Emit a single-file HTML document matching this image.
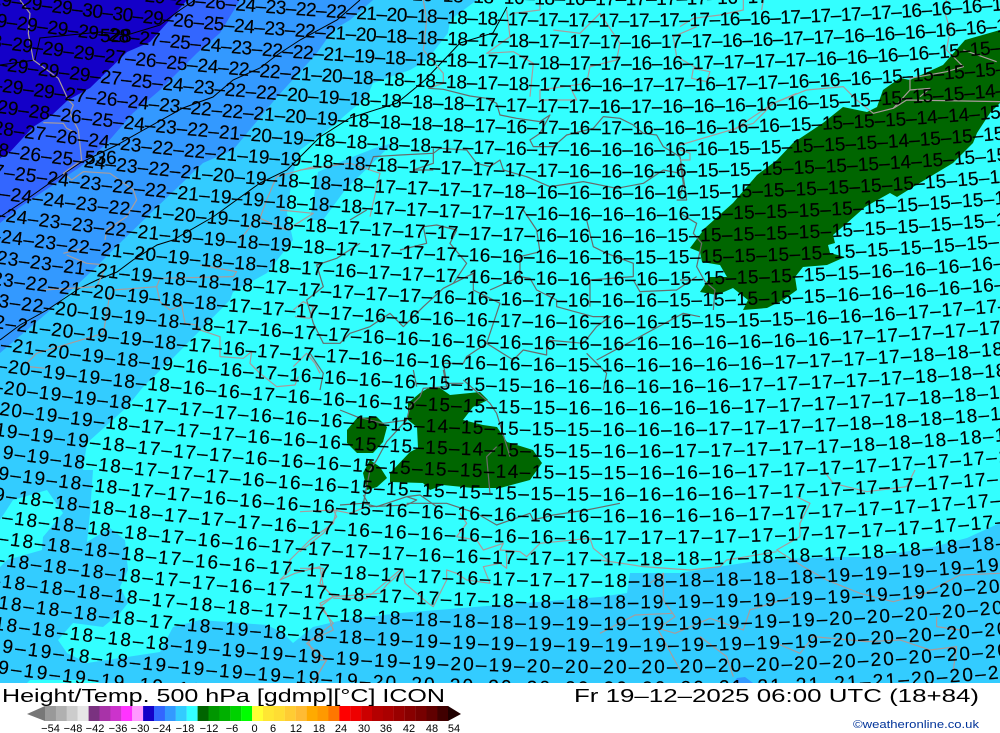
<!DOCTYPE html>
<html><head><meta charset="utf-8"><title>Height/Temp. 500 hPa ICON</title>
<style>
html,body{margin:0;padding:0;background:#fff;width:1000px;height:733px;overflow:hidden}
svg{display:block;position:absolute;left:0;top:0}
.r text{font:19px "Liberation Sans",sans-serif;fill:#000;stroke:#000;stroke-width:.15;font-kerning:none;text-rendering:geometricPrecision}
.f text{font-family:"Liberation Sans",sans-serif;fill:#000}
.l polyline{fill:none;stroke:#a89c9c;stroke-width:3.6;stroke-linejoin:round}
.d polyline{stroke:#6a6a6a}
</style></head><body>
<svg width="1000" height="733" viewBox="0 0 1000 733" xmlns="http://www.w3.org/2000/svg">
<defs><path id="p" d="M-40,-48.4 A4500 4500 0 0 0 1040,-19.6"/><clipPath id="c"><rect width="1000" height="683"/></clipPath></defs>
<g clip-path="url(#c)">
<rect width="1000" height="683" fill="#33ccff"/>
<polygon fill="#33ffff" points="477,0 1000,0 1000,523 967,538 933,547 873,557 833,557 763,560 717,567 680,573 630,573 627,593 600,597 400,613 343,620 313,627 293,643 283,633 267,625 200,620 173,627 160,652 127,657 87,663 67,653 58,640 73,623 103,627 120,613 128,603 120,587 128,570 125,540 110,528 87,542 90,513 93,470 83,470 87,443 127,407 143,387 173,358 230,300 233,292 267,273 293,240 287,213 293,173 300,150 337,123 343,117 367,97 373,83 410,70 427,60 448,33 450,20"/>
<polygon fill="#33ccff" points="393,143 375,148 345,160 318,172 310,220 323,220 345,190"/>
<polygon fill="#33ffff" points="47,490 63,513 43,537 42,550 7,560 0,567 0,520 13,500"/>
<polygon fill="#33ffff" points="27,683 100,683 90,680 30,680"/>
<polygon fill="#3399ff" points="373,0 350,20 333,30 317,53 308,63 277,97 233,150 203,163 157,207 123,240 93,270 47,313 0,353 0,0"/>
<polygon fill="#3366ff" points="240,0 220,33 197,53 160,90 133,113 107,143 80,167 50,187 20,207 0,223 0,0"/>
<polygon fill="#1400c8" points="187,0 167,23 150,42 127,52 90,88 68,100 52,115 33,127 10,152 0,158 0,0"/>
<polygon fill="#3399ff" points="733,683 737,678 745,677 753,683"/>
<g fill="#006600">
<polygon points="430,387 440,388 450,395 480,392 488,400 473,407 463,420 483,425 497,427 507,442 533,450 542,463 530,480 500,488 473,488 443,485 430,490 423,483 390,482 390,473 410,452 418,448 417,427 408,420 408,403 420,393"/>
<polygon points="357,418 377,417 387,427 383,442 373,453 357,453 347,443 347,430"/>
<polygon points="370,460 380,467 387,478 377,487 367,490 363,473"/>
<polygon points="690,248 705,228 733,203 757,175 777,160 793,143 823,123 843,107 867,112 877,107 883,90 900,78 910,80 943,65 965,40 1000,30 1000,103 990,113 977,133 973,143 953,163 913,187 897,197 890,193 865,207 847,223 833,235 835,243 828,245 830,253 845,257 827,265 803,267 795,277 797,290 783,300 767,308 743,310 748,300 733,288 717,295 700,292 710,277 727,277 720,265 702,262 700,252"/>
</g>
<g fill="none" stroke="#000" stroke-width="1">
<polyline points="0,65 35,60 40,38 100,32 127,35 160,25 180,10 195,0"/>
<polyline points="0,217 30,197 47,185 80,163 117,145 147,128 183,108 213,97 233,80 260,68 277,55 300,40 337,20 360,0"/>
<polyline points="0,340 20,325 47,310 80,288 97,280 117,272 133,260 157,245 173,240 213,217 260,183 287,170 300,157 320,137 350,118 397,103 425,80 460,43 493,33 507,7"/>
</g>
<g class="l" transform="scale(.3333)">
<polyline points="60,0 90,40 85,100 100,180 175,235 205,300 220,315 210,340 235,390 245,480 190,520 215,540 250,515 330,520 400,570 410,600 380,650 320,690 315,720"/>
<polyline points="130,368 190,370 200,385 230,400"/>
<polyline points="940,500 830,530 800,600 780,655 860,690 940,640 840,630"/><polyline points="770,655 720,720"/>
</g>
<g class="l" transform="translate(0,230) scale(.3333)">
<polyline points="190,70 250,55"/><polyline points="200,75 260,100 320,105 290,170 130,180"/>
<polyline points="340,180 470,170 480,215 510,240 545,225 555,280 590,285 600,300 660,320 660,380 730,385 755,365 750,400 780,430 830,470 885,465 895,440"/>
<polyline points="80,400 110,370 310,310 330,190"/><polyline points="85,410 135,415"/>
<polyline points="600,105 710,125 700,140 480,145 470,170"/>
<polyline points="880,240 910,215 940,230 930,265 885,260"/>
<polyline points="880,410 920,370 945,400 960,430"/>
</g>
<g class="l" transform="translate(0,470) scale(.3333)">
<polyline points="1010,115 1000,160 930,210 870,270 870,300 840,330 885,310 960,290 970,350 1000,380 960,400 985,440 1000,480 925,515 950,570 980,570 945,630"/>
<polyline points="1000,385 1100,385 1200,300"/>
</g>
<g class="l" transform="translate(600,470) scale(.3333)">
<polyline points="590,80 630,100 600,160 600,200 530,240 610,290 680,330 780,370 880,395 975,370 1080,315 1200,310"/>
<polyline points="0,270 130,290 270,300 360,290 380,270 530,245"/>
<polyline points="150,340 190,310 190,390 225,440 175,475 225,490 330,445 430,480 450,420 580,380"/>
<polyline points="0,490 105,435 220,430"/><polyline points="175,480 240,600"/>
<polyline points="300,500 380,560 400,620"/>
<polyline points="530,520 600,550 640,500 800,515 900,510 990,540 1070,530 1060,600"/>
<polyline points="670,0 700,40 800,65 920,50 945,0"/>
<polyline points="1010,440 1010,470 1080,480"/>
</g>
<g class="l" transform="translate(300,0) scale(.3333)">
<polyline points="620,30 630,110 560,160 640,155 700,190 690,290"/>
<polyline points="720,0 720,30 640,40"/><polyline points="760,90 840,100 900,40 960,130 950,180 870,200 860,250 720,270 720,300 830,300 810,260"/>
<polyline points="1190,80 1120,110 1130,170 1200,210"/>
<polyline points="370,0 380,60 370,150 430,220 430,250 385,265"/>
<polyline points="0,510 150,490 240,520 210,650"/>
</g>
<g class="l d" transform="translate(300,0) scale(.3333)">
<polyline points="385,265 430,268 510,288 560,295 590,310 600,345 650,355 720,365 750,345 720,400 690,420 700,440 760,440 800,405 880,385 910,350 960,355 1000,375 1030,400 1070,405 1090,440 1140,470 1150,530 1160,600 1130,600"/>
<polyline points="205,510 220,470 300,465 400,460 420,445 500,450 530,490 570,500 600,480 610,510 680,530 750,560 850,545 950,565 1030,550 1090,510 1140,520"/>
<polyline points="400,445 400,490 340,510 400,510"/>
</g>
<g class="l d" transform="translate(280,210) scale(.3333)">
<polyline points="210,30 260,0"/>
<polyline points="240,100 170,145 110,165 130,230 80,270 100,340 120,380 130,400 180,400 210,370 270,350 330,310 370,350 430,290 490,235 580,190 580,240 660,280 640,340 620,400 560,440 550,460 490,460 500,520 550,520"/>
<polyline points="360,120 440,100 430,50 470,45 530,60 510,100 560,160 520,220"/>
<polyline points="720,200 750,205 770,240 830,270 830,290 940,320 990,320 950,350 910,400 800,390 800,435 730,420 700,450 620,400"/>
<polyline points="720,140 780,125 770,60 730,0"/><polyline points="720,140 720,200 630,240"/>
<polyline points="930,210 1060,200 1060,160 980,130 940,110 920,30"/><polyline points="930,210 930,290"/>
<polyline points="1060,210 1080,245 1190,240 1250,200"/>
<polyline points="950,450 1080,380 1210,310 1260,320"/><polyline points="920,430 980,490 970,540"/>
<polyline points="90,430 130,490 120,540"/>
</g>
<g class="l" transform="translate(680,0) scale(.3333)">
<polyline points="0,80 40,55 120,45 190,30 190,0"/><polyline points="250,0 245,30"/>
<polyline points="40,205 35,235 80,245 90,215 40,205"/>
<polyline points="160,390 280,310 380,270 490,260 530,300 580,340 640,325 690,270 690,235"/>
<polyline points="640,325 680,300 960,305"/>
<polyline points="690,235 800,215 850,200 800,150 810,90 790,20 800,0"/>
<polyline points="850,150 950,185"/><polyline points="690,270 750,265 720,290"/>
</g>
<g class="l" transform="translate(680,60) scale(.3333)">
<polyline points="0,270 30,280 30,300 0,300"/><polyline points="0,255 220,190 280,130 350,100"/>
</g>
<g class="l d" transform="translate(680,60) scale(.3333)">
<polyline points="0,310 10,370 0,410"/><polyline points="0,460 50,490 40,520 65,550 50,620 75,665 105,690 100,750"/><polyline points="60,660 0,660"/>
</g>
<g class="l d" transform="translate(340,370) scale(.3333)">
<polyline points="220,0 230,50"/><polyline points="310,0 320,50 250,55 240,80 210,110 200,150 140,215 110,270 90,300 70,400"/>
<polyline points="0,120 50,140 130,160 200,150"/><polyline points="370,30 450,100 470,130 510,260"/>
<polyline points="470,230 440,260 450,370"/><polyline points="0,405 70,400 110,410 200,380 240,375 290,410"/>
</g>
<g class="l d" transform="translate(300,490) scale(.3333)">
<polyline points="190,15 210,50 320,45 350,30 320,20"/>
<polyline points="320,40 440,40 530,70 590,105 690,70 700,90 760,75 860,60 960,40"/>
</g>
<g class="l" transform="translate(300,490) scale(.3333)">
<polyline points="0,65 100,60 150,70 200,50"/><polyline points="100,60 110,80 70,130 0,185"/>
<polyline points="480,70 500,100 470,140 530,150 550,180 610,160 600,180 660,185 680,200 720,160 870,145 880,175 930,215"/>
<polyline points="0,235 70,235 60,280 100,320 60,350 100,400 20,460 80,510 40,575"/>
<polyline points="100,320 240,310 260,285 310,240 315,280 385,340 400,350 440,270 440,240 470,250 500,270 570,280 550,230 600,220 620,235 620,190"/>
</g>
<g class="r">
<text transform="translate(0,5)" letter-spacing="-.4"><textPath href="#p" startOffset="424">21–20–18–18–16–18–16–17–17–17–17–16–17–</textPath></text>
<text transform="translate(0,26.5)" letter-spacing="-.46"><textPath href="#p" startOffset="186">29–26–26–24–23–22–22–21–20–18–18–18–17–17–17–17–17–17–17–16–16–17–17–17–17–16–16–16–16–</textPath></text>
<text transform="translate(0,48)" letter-spacing="-.39"><textPath href="#p" startOffset="31">29–29–29–30–30–29–26–25–24–23–22–21–20–18–18–18–17–18–17–17–17–16–17–17–16–16–17–17–16–16–16–16–16–16–</textPath></text>
<text transform="translate(0,69.6)" letter-spacing="-.29"><textPath href="#p" startOffset="26">29–29–29–29–28–27–25–24–23–22–22–21–19–18–18–18–17–17–18–17–17–16–16–17–17–17–17–16–16–16–16–15–15–</textPath></text>
<text transform="translate(0,91.1)" letter-spacing="-.19"><textPath href="#p" startOffset="20.6">28–29–29–29–27–26–25–24–22–22–21–20–18–18–18–18–17–18–17–16–16–17–17–16–17–17–16–16–16–15–15–15–15–</textPath></text>
<text transform="translate(0,112.7)" letter-spacing="-.13"><textPath href="#p" startOffset="15.8">29–29–29–29–27–25–24–23–22–22–20–19–18–18–18–18–17–17–17–17–16–17–16–16–16–16–16–15–15–15–15–15–14–</textPath></text>
<text transform="translate(0,134.2)" letter-spacing="-.03"><textPath href="#p" startOffset="10.4">29–29–29–27–26–24–23–22–22–21–20–19–18–18–18–18–17–16–17–16–17–16–16–16–16–16–15–15–15–15–14–14–15–</textPath></text>
<text transform="translate(0,155.8)" letter-spacing=".07"><textPath href="#p" startOffset="5">29–29–28–26–25–24–23–22–21–20–19–18–18–18–18–17–17–16–17–16–16–16–16–16–15–15–15–15–15–14–15–15–15–</textPath></text>
<text transform="translate(0,177.3)" letter-spacing=".14"><textPath href="#p" startOffset=".2">29–28–27–26–24–23–22–22–21–19–19–18–18–18–17–17–17–17–17–16–16–16–16–15–15–15–15–15–15–14–15–15–15–</textPath></text>
<text transform="translate(0,198.9)" letter-spacing=".24"><textPath href="#p" startOffset="27.2">28–26–25–24–23–22–21–20–19–18–18–18–17–17–17–17–18–16–16–16–16–16–15–15–15–15–15–15–15–15–15–15–</textPath></text>
<text transform="translate(0,220.4)" letter-spacing=".34"><textPath href="#p" startOffset="22.1">27–25–24–23–22–22–21–19–19–18–18–18–17–17–17–17–17–16–16–16–16–16–15–15–15–15–15–15–15–15–15–15–</textPath></text>
<text transform="translate(0,242)" letter-spacing=".41"><textPath href="#p" startOffset="17.5">25–24–24–23–22–21–20–19–18–18–18–17–17–17–17–17–17–16–16–16–16–15–15–15–15–15–15–15–15–15–15–15–</textPath></text>
<text transform="translate(0,263.5)" letter-spacing=".51"><textPath href="#p" startOffset="12.4">25–24–23–23–22–21–19–19–18–19–18–17–17–17–17–16–16–16–16–16–15–15–15–15–15–15–15–15–15–15–15–</textPath></text>
<text transform="translate(0,285.1)" letter-spacing=".61"><textPath href="#p" startOffset="7.4">25–24–23–22–21–20–19–18–18–18–17–16–17–17–17–16–16–16–16–16–16–15–15–15–15–15–15–16–16–16–16–</textPath></text>
<text transform="translate(0,306.6)" letter-spacing=".67"><textPath href="#p" startOffset="2.6">24–23–23–21–21–19–18–18–18–17–17–17–17–17–16–16–16–17–16–16–16–15–15–15–15–15–16–16–16–16–16–</textPath></text>
<text transform="translate(0,328.2)" letter-spacing=".77"><textPath href="#p" startOffset="31.6">23–22–21–20–19–18–18–17–17–17–17–16–16–16–16–17–16–16–16–16–15–15–15–15–16–16–16–17–17–17–</textPath></text>
<text transform="translate(0,349.7)" letter-spacing=".87"><textPath href="#p" startOffset="26.8">23–22–20–19–19–18–18–17–16–17–17–16–16–16–16–16–16–16–16–16–16–16–16–16–16–17–17–17–17–17–</textPath></text>
<text transform="translate(0,371.3)" letter-spacing=".94"><textPath href="#p" startOffset="22.4">22–21–20–19–19–18–17–16–17–17–17–16–16–16–16–16–16–15–16–16–16–16–16–17–17–17–17–18–18–18–</textPath></text>
<text transform="translate(0,392.8)" letter-spacing="1.04"><textPath href="#p" startOffset="17.6">22–21–20–19–18–19–16–16–17–16–16–16–16–15–15–15–16–16–16–16–16–16–17–17–17–17–17–18–18–18–</textPath></text>
<text transform="translate(0,414.4)" letter-spacing="1.14"><textPath href="#p" startOffset="12.8">21–20–19–19–18–18–16–16–17–16–16–16–15–15–15–15–15–16–16–16–16–16–17–17–17–17–17–18–18–18–</textPath></text>
<text transform="translate(0,435.9)" letter-spacing="1.21"><textPath href="#p" startOffset="8.4">21–20–19–19–18–17–17–17–16–16–16–15–15–14–15–15–15–15–16–16–16–17–17–17–17–18–18–18–18–18–</textPath></text>
<text transform="translate(0,457.5)" letter-spacing="1.31"><textPath href="#p" startOffset="3.6">21–20–19–19–18–17–17–17–16–16–16–15–15–15–14–15–15–15–16–16–17–17–17–17–17–18–18–18–18–17–</textPath></text>
<text transform="translate(0,479)" letter-spacing="1.41"><textPath href="#p" startOffset="34.7">19–19–19–18–17–17–17–16–16–16–15–15–15–15–14–15–15–15–16–16–16–17–17–17–17–17–17–17–17–</textPath></text>
<text transform="translate(0,500.6)" letter-spacing="1.47"><textPath href="#p" startOffset="30.5">19–19–18–18–17–17–17–16–16–16–15–15–15–15–15–15–15–16–16–16–16–17–17–17–17–17–17–17–17–</textPath></text>
<text transform="translate(0,522.1)" letter-spacing="1.57"><textPath href="#p" startOffset="26">19–19–18–18–17–17–16–16–16–16–15–16–16–16–16–16–16–16–16–16–16–17–17–17–17–17–17–17–17–</textPath></text>
<text transform="translate(0,543.7)" letter-spacing="1.67"><textPath href="#p" startOffset="21.5">19–18–18–18–18–17–17–17–16–17–16–16–16–16–16–16–16–17–17–17–17–17–17–17–17–17–17–17–</textPath></text>
<text transform="translate(0,565.2)" letter-spacing="1.74"><textPath href="#p" startOffset="17.3">19–18–18–18–18–17–16–16–17–17–17–17–16–16–17–17–17–17–18–18–17–18–18–17–18–18–18–18–</textPath></text>
<text transform="translate(0,586.8)" letter-spacing="1.84"><textPath href="#p" startOffset="12.8">19–18–18–18–18–17–16–16–17–17–18–17–17–16–17–17–17–18–18–18–18–18–18–19–19–19–19–19–</textPath></text>
<text transform="translate(0,608.3)" letter-spacing="1.91"><textPath href="#p" startOffset="8.6">19–18–18–18–18–17–17–16–17–17–18–17–17–17–18–18–18–18–19–19–19–19–19–19–19–19–20–20–</textPath></text>
<text transform="translate(0,629.9)" letter-spacing="2.01"><textPath href="#p" startOffset="4.1">19–18–18–18–18–17–18–18–17–17–18–18–18–18–18–19–19–19–19–19–19–19–19–20–20–20–20–20–</textPath></text>
<text transform="translate(0,651.4)" letter-spacing="2.11"><textPath href="#p" startOffset="0">19–18–18–18–18–17–18–19–18–18–18–19–19–19–19–19–19–19–19–19–19–19–19–20–20–20–20–20–</textPath></text>
<text transform="translate(0,673)" letter-spacing="2.17"><textPath href="#p" startOffset="33.6">18–18–18–18–18–19–19–19–19–19–19–19–20–19–20–20–20–20–20–20–20–20–20–20–20–20–20–</textPath></text>
<text transform="translate(0,694.5)" letter-spacing="2.27"><textPath href="#p" startOffset="29.4">19–19–18–18–19–19–19–19–19–19–20–20–20–20–20–20–20–20–20–21–21–21–21–21–20–20–20–</textPath></text>
<text transform="translate(0,716.1)" letter-spacing="2.37"><textPath href="#p" startOffset="25">19–19–19–19–19–19–19–19–</textPath></text>
<text x="100" y="42" font-size="19">528</text>
<text x="85" y="164" font-size="19">536</text>
</g>
</g>
<rect y="683" width="1000" height="50" fill="#fff"/>
<g>
<polygon points="27,714 45,706 45,721" fill="#777"/>
<rect x="45" y="706" width="11" height="15" fill="#999"/><rect x="55.9" y="706" width="11" height="15" fill="#b0b0b0"/><rect x="66.8" y="706" width="11" height="15" fill="#ccc"/><rect x="77.7" y="706" width="11" height="15" fill="#e6e6e6"/><rect x="88.6" y="706" width="11" height="15" fill="#7a3280"/><rect x="99.5" y="706" width="11" height="15" fill="#a833a8"/><rect x="110.4" y="706" width="11" height="15" fill="#cc33cc"/><rect x="121.3" y="706" width="11" height="15" fill="#ff33ff"/><rect x="132.2" y="706" width="11" height="15" fill="#ff99ff"/><rect x="143.1" y="706" width="11" height="15" fill="#1400c8"/><rect x="154" y="706" width="11" height="15" fill="#3366ff"/><rect x="164.9" y="706" width="11" height="15" fill="#3399ff"/><rect x="175.8" y="706" width="11" height="15" fill="#33ccff"/><rect x="186.7" y="706" width="11" height="15" fill="#33ffff"/><rect x="197.6" y="706" width="11" height="15" fill="#006400"/><rect x="208.5" y="706" width="11" height="15" fill="#009600"/><rect x="219.4" y="706" width="11" height="15" fill="#00b000"/><rect x="230.3" y="706" width="11" height="15" fill="#00d200"/><rect x="241.2" y="706" width="11" height="15" fill="#00ff00"/><rect x="252.1" y="706" width="11" height="15" fill="#ffff33"/><rect x="263" y="706" width="11" height="15" fill="#ffe633"/><rect x="273.9" y="706" width="11" height="15" fill="#ffdd33"/><rect x="284.8" y="706" width="11" height="15" fill="#ffcc33"/><rect x="295.7" y="706" width="11" height="15" fill="#ffbb33"/><rect x="306.6" y="706" width="11" height="15" fill="#ffaa00"/><rect x="317.5" y="706" width="11" height="15" fill="#ff9900"/><rect x="328.4" y="706" width="11" height="15" fill="#ff7700"/><rect x="339.3" y="706" width="11" height="15" fill="#ff0000"/><rect x="350.2" y="706" width="11" height="15" fill="#ee0000"/><rect x="361.1" y="706" width="11" height="15" fill="#cc0000"/><rect x="372" y="706" width="11" height="15" fill="#b40000"/><rect x="382.9" y="706" width="11" height="15" fill="#aa0000"/><rect x="393.8" y="706" width="11" height="15" fill="#990000"/><rect x="404.7" y="706" width="11" height="15" fill="#880000"/><rect x="415.6" y="706" width="11" height="15" fill="#770000"/><rect x="426.5" y="706" width="11" height="15" fill="#600000"/><rect x="437.4" y="706" width="11" height="15" fill="#400000"/>
<polygon points="448,706 461,714 448,721" fill="#200000"/>
</g>
<g class="f">
<text x="2" y="702" font-size="18" textLength="443" lengthAdjust="spacingAndGlyphs">Height/Temp. 500 hPa [gdmp][°C] ICON</text>
<text x="574" y="702" font-size="18" textLength="405" lengthAdjust="spacingAndGlyphs">Fr 19–12–2025 06:00 UTC (18+84)</text>
<text x="853" y="728" font-size="11" textLength="126" lengthAdjust="spacingAndGlyphs" style="fill:#003399">©weatheronline.co.uk</text>
<g font-size="11" text-anchor="middle">
<text x="50.5" y="732">−54</text><text x="73" y="732">−48</text><text x="95" y="732">−42</text><text x="118" y="732">−36</text><text x="140" y="732">−30</text><text x="162" y="732">−24</text><text x="185" y="732">−18</text><text x="209" y="732">−12</text><text x="232" y="732">−6</text><text x="254.5" y="732">0</text><text x="273" y="732">6</text><text x="296" y="732">12</text><text x="319" y="732">18</text><text x="341" y="732">24</text><text x="364" y="732">30</text><text x="386" y="732">36</text><text x="409" y="732">42</text><text x="432" y="732">48</text><text x="454" y="732">54</text>
</g>
</g>
</svg>
</body></html>
